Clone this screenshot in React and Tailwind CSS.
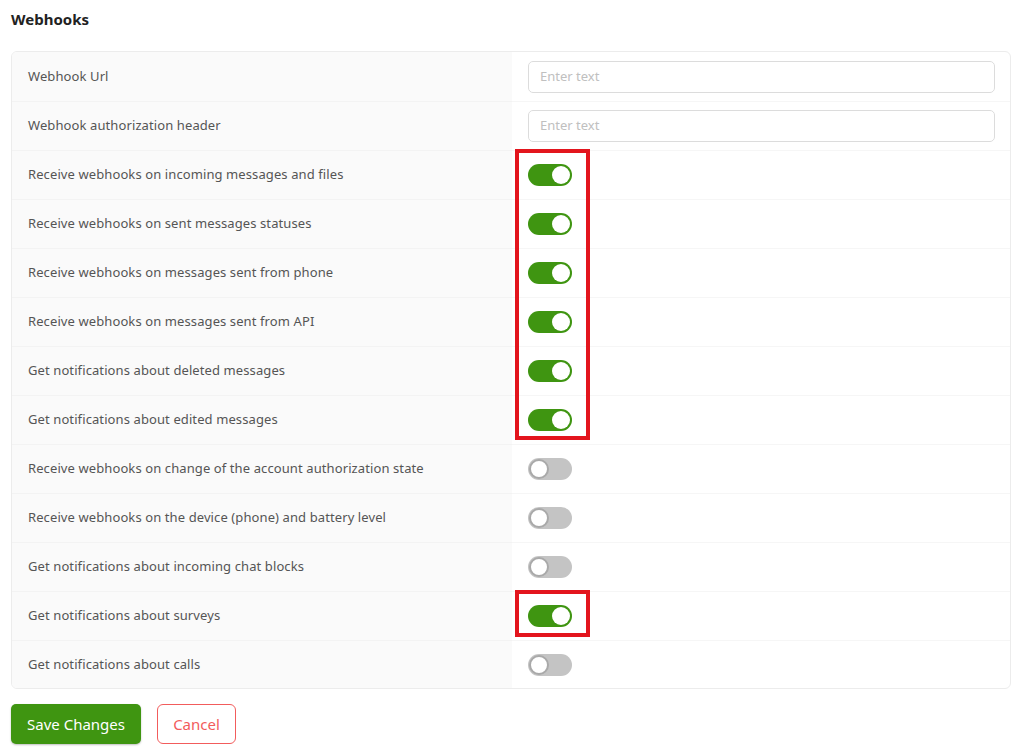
import React from "react";

const rows = [
  { label: "Webhook Url", type: "input" },
  { label: "Webhook authorization header", type: "input" },
  { label: "Receive webhooks on incoming messages and files", on: true },
  { label: "Receive webhooks on sent messages statuses", on: true },
  { label: "Receive webhooks on messages sent from phone", on: true },
  { label: "Receive webhooks on messages sent from API", on: true },
  { label: "Get notifications about deleted messages", on: true },
  { label: "Get notifications about edited messages", on: true },
  { label: "Receive webhooks on change of the account authorization state", on: false },
  { label: "Receive webhooks on the device (phone) and battery level", on: false },
  { label: "Get notifications about incoming chat blocks", on: false },
  { label: "Get notifications about surveys", on: true },
  { label: "Get notifications about calls", on: false },
];

function Toggle({ on }) {
  return on ? (
    <div className="relative h-[22px] w-[44px] rounded-full bg-[#3f9511]">
      <div className="absolute right-[2px] top-[2px] h-[18px] w-[18px] rounded-full bg-white" />
    </div>
  ) : (
    <div className="relative h-[22px] w-[44px] rounded-full bg-[#c4c4c4]">
      <div className="absolute left-[1px] top-[1px] h-[20px] w-[20px] rounded-full border-2 border-[#a9a9a9] bg-white" />
    </div>
  );
}

export default function App() {
  const last = rows.length - 1;
  return (
    <div
      className="min-h-[749px] w-[1025px] bg-white px-[11px] pt-[9px]"
      style={{ fontFamily: '"Noto Sans", "Open Sans", sans-serif' }}
    >
      <h2 className="text-[15px] font-bold leading-[20px] text-[#222]">Webhooks</h2>
      <div className="relative mt-[22px] w-[1000px] overflow-hidden rounded-[6px] border border-[#ececec]">
        {rows.map((r, i) => (
          <div key={i} className={`flex ${i === last ? "h-[48px]" : "h-[49px]"}`}>
            <div
              className={`flex w-[500px] items-center bg-[#fafafa] pl-[16px] text-[13px] tracking-[0.1px] text-[#555] ${
                i > 0 ? "border-t border-[#f3f3f3]" : ""
              }`}
            >
              {r.label}
            </div>
            <div
              className={`flex flex-1 items-center pl-[16px] pr-[15px] ${
                i > 0 ? "border-t border-[#f6f6f6]" : ""
              }`}
            >
              {r.type === "input" ? (
                <div className="flex h-[32px] w-full items-center rounded-[5px] border border-[#dcdcdc] px-[11px] text-[13px] text-[#c0c0c0]">
                  Enter text
                </div>
              ) : (
                <Toggle on={r.on} />
              )}
            </div>
          </div>
        ))}
        <div className="pointer-events-none absolute left-[503px] top-[97px] h-[291px] w-[75px] border-[4px] border-[#e3151d]" />
        <div className="pointer-events-none absolute left-[503px] top-[538px] h-[47px] w-[75px] border-[4px] border-[#e3151d]" />
      </div>
      <div className="mt-[15px] flex gap-[16px]">
        <button className="h-[40px] w-[130px] rounded-[5px] bg-[#3f9511] text-[15px] text-white shadow-[0_1px_2px_rgba(0,0,0,0.25)]">
          Save Changes
        </button>
        <button className="h-[40px] w-[79px] rounded-[6px] border border-[#f25c5c] bg-white text-[15px] text-[#f25c5c]">
          Cancel
        </button>
      </div>
    </div>
  );
}
